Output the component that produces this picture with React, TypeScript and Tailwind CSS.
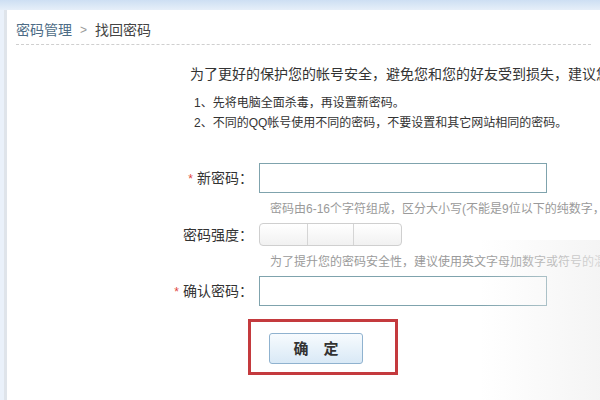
/*
 * 找回密码 — reset password form (QQ security centre style)
 */

const font = "font-['Liberation_Sans','Noto_Sans_CJK_SC',sans-serif]";

function Label({ text, required }: { text: string; required?: boolean }) {
  return (
    <div className="w-[246px] shrink-0 text-right text-[14px] leading-[18px] text-[#333]">
      {required && <span className="mr-[4px] text-[12px] text-[#e0453d]">*</span>}
      {text}
    </div>
  );
}

function Hint({ children }: { children: string }) {
  return (
    <div className="whitespace-nowrap pl-[263px] text-[12px] leading-[16px] text-[#9a9a9a]">
      {children}
    </div>
  );
}

export default function App() {
  return (
    <div className={`${font} flex h-[400px] w-[600px] flex-col overflow-hidden bg-[#eef3fa]`}>
      {/* top band */}
      <div className="h-[10px] shrink-0 bg-gradient-to-b from-[#cddff3] to-[#e6eff9]" />

      <div className="flex flex-1">
        {/* left strip */}
        <div className="flex w-[7px] shrink-0">
          <div className="w-[4px] bg-[#eaf1fa]" />
          <div className="w-[3px] bg-[#dfe4ea]" />
        </div>

        {/* panel */}
        <div className="relative flex-1 overflow-hidden bg-white">
          {/* breadcrumb */}
          <div className="mx-[9px] flex items-center gap-[8px] whitespace-nowrap border-b border-dashed border-[#cfcfcf] pb-[4px] pt-[11px] text-[14px] leading-[19px]">
            <span className="text-[#4d6c86]">密码管理</span>
            <span className="text-[12px] text-[#999]">&gt;</span>
            <span className="text-[#444]">找回密码</span>
          </div>

          {/* intro */}
          <div className="whitespace-nowrap pl-[183px] pt-[19px] text-[14px] leading-[20px] text-[#333]">
            为了更好的保护您的帐号安全，避免您和您的好友受到损失，建议您
          </div>
          <div className="mt-[9px] flex flex-col whitespace-nowrap pl-[187px] text-[12px] leading-[20px] text-[#333]">
            <div>1、先将电脑全面杀毒，再设置新密码。</div>
            <div>2、不同的QQ帐号使用不同的密码，不要设置和其它网站相同的密码。</div>
          </div>

          {/* form */}
          <div className="mt-[30px] flex items-center gap-[6px]">
            <Label text="新密码：" required />
            <input className="h-[30px] w-[288px] border border-[#7fa3ad] bg-white px-2 outline-none" />
          </div>
          <div className="mt-[8px]">
            <Hint>密码由6-16个字符组成，区分大小写(不能是9位以下的纯数字，</Hint>
          </div>

          <div className="mt-[6px] flex items-center gap-[6px]">
            <Label text="密码强度：" />
            <div className="flex h-[23px] w-[143px] overflow-hidden rounded-[4px] border border-[#cfcfcf] bg-gradient-to-b from-white to-[#f1f1f1]">
              <div className="w-[48px] border-r border-[#d5d5d5]" />
              <div className="w-[46px] border-r border-[#d5d5d5]" />
              <div className="flex-1" />
            </div>
          </div>
          <div className="mt-[8px]">
            <Hint>为了提升您的密码安全性，建议使用英文字母加数字或符号的混合密码。</Hint>
          </div>

          <div className="mt-[6px] flex items-center gap-[6px]">
            <Label text="确认密码：" required />
            <input className="h-[30px] w-[288px] border border-[#7fa3ad] bg-white px-2 outline-none" />
          </div>

          {/* confirm button, boxed */}
          <div className="ml-[241px] mt-[13px] h-[56px] w-[150px] border-[3px] border-[#c43a3e] pl-[18px] pt-[11px]">
            <button className="h-[31px] w-[94px] rounded-[3px] border border-[#8fb2cf] bg-gradient-to-b from-[#f7fbfe] to-[#d9e9f6] text-[15px] font-bold leading-[20px] text-[#333]">
              确　定
            </button>
          </div>

          {/* soft shading at the bottom right */}
          <div className="pointer-events-none absolute bottom-0 right-0 h-[160px] w-[120px] bg-gradient-to-l from-[#f0f0f0] to-transparent opacity-70" />
        </div>
      </div>
    </div>
  );
}
